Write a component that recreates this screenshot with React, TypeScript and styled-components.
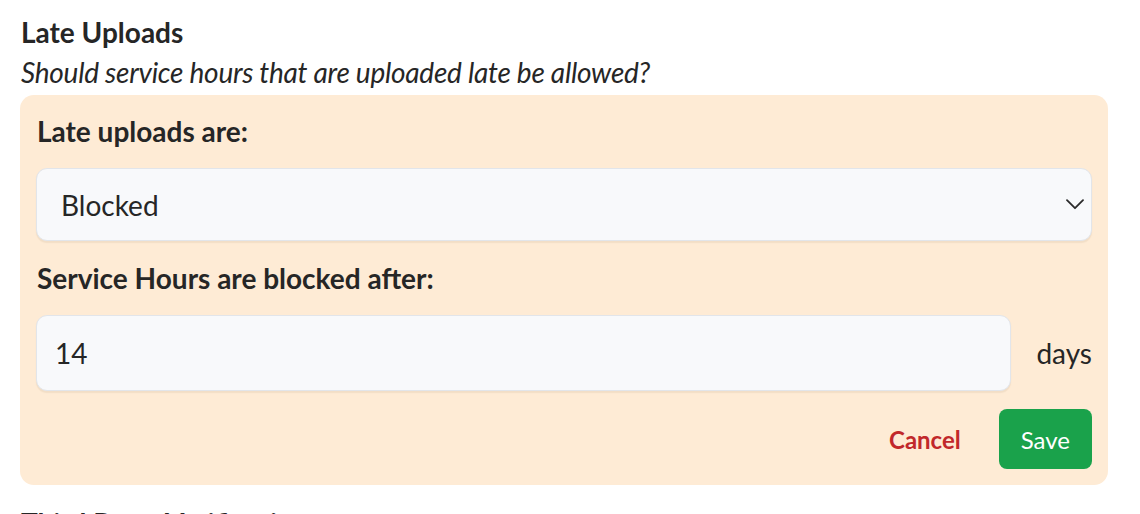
import React from 'react'
import styled, { createGlobalStyle } from 'styled-components'

const GlobalStyle = createGlobalStyle`
  html, body {
    margin: 0;
    padding: 0;
    background: #ffffff;
  }
  body {
    font-family: Lato, 'Noto Sans', sans-serif;
    color: #262626;
    font-size: 28px;
    line-height: 40px;
  }
`

const Page = styled.div`
  padding: 12px 32px 0 20px;
  width: 1088px;
`

const Section = styled.section`
  margin-bottom: 18px;
`

const Heading = styled.h2`
  margin: 0 0 0 1px;
  font-size: 28px;
  line-height: 40px;
  font-weight: 700;
`

const Subtitle = styled.p`
  margin: 0 0 3px 1px;
  font-style: italic;
  font-size: 28px;
  line-height: 40px;
  letter-spacing: -0.25px;
`

const Panel = styled.div`
  background: #feebd5;
  border-radius: 14px;
  padding: 16px;
  display: flex;
  flex-direction: column;
`

const Label = styled.label`
  display: block;
  font-weight: 700;
  font-size: 28px;
  line-height: 40px;
  margin-bottom: 17px;
  margin-left: 1px;
`

const Field = styled.div`
  position: relative;
  margin-bottom: 17px;
`

const Select = styled.select`
  appearance: none;
  -webkit-appearance: none;
  width: 100%;
  height: 73px;
  box-sizing: border-box;
  padding: 0 60px 0 24px;
  font-family: Lato, 'Noto Sans', sans-serif;
  font-size: 28px;
  color: #262626;
  background: #f8f9fb;
  border: 1.5px solid #e2e5ea;
  border-radius: 11px;
  box-shadow: 0 1.5px 1px rgba(160, 130, 100, 0.12);
  outline: none;
`

const Chevron = styled.svg`
  position: absolute;
  right: 8px;
  top: 31px;
  pointer-events: none;
`

const InputRow = styled.div`
  display: flex;
  align-items: center;
  gap: 25px;
  margin-bottom: 18px;
`

const TextInput = styled.input`
  flex: 1;
  min-width: 0;
  height: 76px;
  box-sizing: border-box;
  padding: 0 18px;
  font-family: Lato, 'Noto Sans', sans-serif;
  font-size: 28px;
  color: #262626;
  background: #f8f9fb;
  border: 1.5px solid #e2e5ea;
  border-radius: 11px;
  box-shadow: 0 1.5px 1px rgba(160, 130, 100, 0.12);
  outline: none;
`

const Unit = styled.span`
  font-size: 28px;
  line-height: 40px;
`

const Actions = styled.div`
  display: flex;
  justify-content: flex-end;
  align-items: center;
  gap: 16px;
`

const Button = styled.button<{ $primary?: boolean }>`
  height: 60px;
  padding: 0 22px;
  border: none;
  border-radius: 8px;
  font-family: Lato, 'Noto Sans', sans-serif;
  font-size: 24px;
  cursor: pointer;
  font-weight: ${({ $primary }) => ($primary ? 400 : 700)};
  background: ${({ $primary }) => ($primary ? '#1aa24b' : 'transparent')};
  color: ${({ $primary }) => ($primary ? '#ffffff' : '#c1282b')};
`

export default function App() {
  return (
    <>
      <GlobalStyle />
      <Page>
        <Section>
          <Heading>Late Uploads</Heading>
          <Subtitle>Should service hours that are uploaded late be allowed?</Subtitle>
          <Panel>
            <Label htmlFor="late-mode">Late uploads are:</Label>
            <Field>
              <Select id="late-mode" defaultValue="blocked">
                <option value="allowed">Allowed</option>
                <option value="blocked">Blocked</option>
              </Select>
              <Chevron width="18" height="11" viewBox="0 0 18 11">
                <path
                  d="M1 1.2 L9 9.2 L17 1.2"
                  fill="none"
                  stroke="#2b2b2b"
                  strokeWidth="1.8"
                  strokeLinecap="round"
                  strokeLinejoin="round"
                />
              </Chevron>
            </Field>
            <Label htmlFor="late-days">Service Hours are blocked after:</Label>
            <InputRow>
              <TextInput id="late-days" type="text" defaultValue="14" />
              <Unit>days</Unit>
            </InputRow>
            <Actions>
              <Button>Cancel</Button>
              <Button $primary>Save</Button>
            </Actions>
          </Panel>
        </Section>
        <Section>
          <Heading>Third Party Verification</Heading>
        </Section>
      </Page>
    </>
  )
}
